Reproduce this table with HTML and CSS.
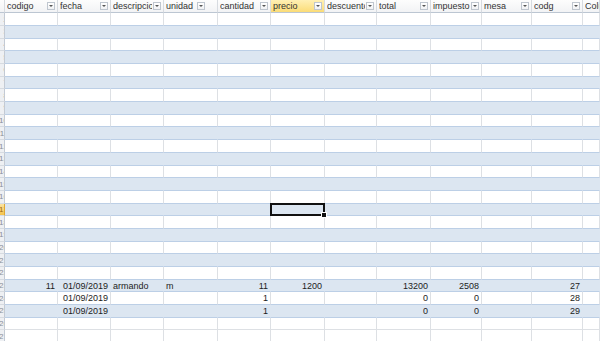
FILE: index.html
```html
<!DOCTYPE html>
<html lang="es">
<head>
    <meta charset="UTF-8"/>
    <title>Ventas</title>
    <link rel="stylesheet" href="styles.css">
</head>
<body>
<div class="sheet" id="sheet"></div>

<script>
    const fields = ["codigo", "fecha", "descripcion", "unidad", "cantidad", "precio",
        "descuento", "total", "impuesto", "mesa", "codg", "Columna1"];
    // columnas alineadas a la derecha (numeros y fechas)
    const numeric = [0, 1, 4, 5, 6, 7, 8, 9, 10];

    const records = {
        21: ["11", "01/09/2019", "armando", "m", "11", "1200", "", "13200", "2508", "", "27", ""],
        22: ["", "01/09/2019", "", "", "1", "", "", "0", "0", "", "28", ""],
        23: ["", "01/09/2019", "", "", "1", "", "", "0", "0", "", "29", ""]
    };

    const tableRows = 24;
    const extraRows = 2;
    const activeRow = 15;
    const activeCol = 5;
    const firstNumber = 2;

    const sheet = document.getElementById("sheet");

    function cell(cls, text) {
        const d = document.createElement("div");
        d.className = cls;
        if (text) d.textContent = text;
        return d;
    }

    // encabezado con los nombres de campo y botones de filtro
    const head = cell("row head");
    head.appendChild(cell("rh"));
    fields.forEach((name, i) => {
        let cls = "hc";
        if (i === activeCol) cls += " sel";
        if (name === "unidad") cls += " wide";
        if (i === fields.length - 1) cls += " last";
        const h = cell(cls);
        h.appendChild(cell("label", name));
        h.appendChild(cell("drop"));
        head.appendChild(h);
    });
    sheet.appendChild(head);

    for (let r = 0; r < tableRows + extraRows; r++) {
        let cls = "row";
        if (r >= tableRows) cls += " free";
        else if (r % 2 === 1) cls += " band";
        const row = cell(cls);
        const rh = cell("rh" + (r === activeRow ? " sel" : ""));
        rh.appendChild(cell("num-label", String(firstNumber + r)));
        row.appendChild(rh);
        const data = records[r] || [];
        fields.forEach((_, i) => {
            let c = "c";
            if (numeric.includes(i)) c += " num";
            if (r === activeRow && i === activeCol) c += " cur";
            row.appendChild(cell(c, data[i] || ""));
        });
        sheet.appendChild(row);
    }
</script>
</body>
</html>
```

FILE: styles.css
```css
body {
    margin: 0;
    font-family: "Liberation Sans", Arial, sans-serif;
    font-size: 9px;
    color: #1c1c1c;
    background: #fff;
    overflow: hidden;
}

.sheet {
    display: flex;
    flex-direction: column;
}

.row {
    display: grid;
    grid-template-columns: 5px 53px 53px 53px 54px 53px 54px 52px 54px 51px 50px 51px 1fr;
    height: 12.7px;
}

.row > div {
    box-sizing: border-box;
    display: flex;
    align-items: center;
    overflow: hidden;
    white-space: nowrap;
    padding: 0 2px;
    border-right: 1px solid #dde0e4;
    border-bottom: 1px solid #bccfe6;
    background: #fff;
}

.row.band > .c {
    background: #dce6f1;
    border-right-color: #dce6f1;
}

.row.free > div {
    border-bottom-color: #dde0e4;
}

.c.num {
    justify-content: flex-end;
}

/* numeros de fila, casi fuera de la vista */
.row > .rh {
    padding: 0;
    justify-content: flex-end;
    color: #8a8f96;
    background: #eef0f3;
    border-right-color: #c3cad4;
    border-bottom-color: #d6dbe1;
}

.rh .num-label {
    margin-right: -4px;
    font-size: 8px;
}

.row > .rh.sel {
    background: linear-gradient(#fbe3a0, #f5c44c);
    border-right-color: #e0a832;
    color: #a06a10;
}

/* encabezado */
.row.head {
    height: 13.3px;
}

.row.head > div {
    background: linear-gradient(#fdfdfd, #f2f3f5);
    border-right-color: #d7dbe0;
    border-bottom-color: #bcc6d2;
    color: #333;
}

.row.head > .hc.sel {
    background: linear-gradient(#fff0b4, #fbdc77);
}

.hc .label {
    flex: 1;
    overflow: hidden;
    white-space: nowrap;
}

.hc.last .label {
    flex: none;
}

.hc .drop {
    position: relative;
    flex: none;
    width: 8px;
    height: 8px;
    box-sizing: border-box;
    margin-left: 1px;
    border: 1px solid #bfc6cf;
    background: linear-gradient(#fff, #f1f2f4);
}

.hc.wide .drop {
    margin-right: 10px;
}

.hc .drop::after {
    content: "";
    position: absolute;
    left: 1px;
    top: 2px;
    border-left: 2px solid transparent;
    border-right: 2px solid transparent;
    border-top: 2px solid #555;
}

/* celda activa */
.row > .cur {
    position: relative;
    overflow: visible;
}

.cur::after {
    content: "";
    position: absolute;
    left: -1px;
    top: -1px;
    right: -1px;
    bottom: -1px;
    border: 2px solid #111;
    z-index: 2;
}

.cur::before {
    content: "";
    position: absolute;
    right: -3px;
    bottom: -3px;
    width: 4px;
    height: 4px;
    background: #111;
    border: 1px solid #fff;
    z-index: 3;
}
```
